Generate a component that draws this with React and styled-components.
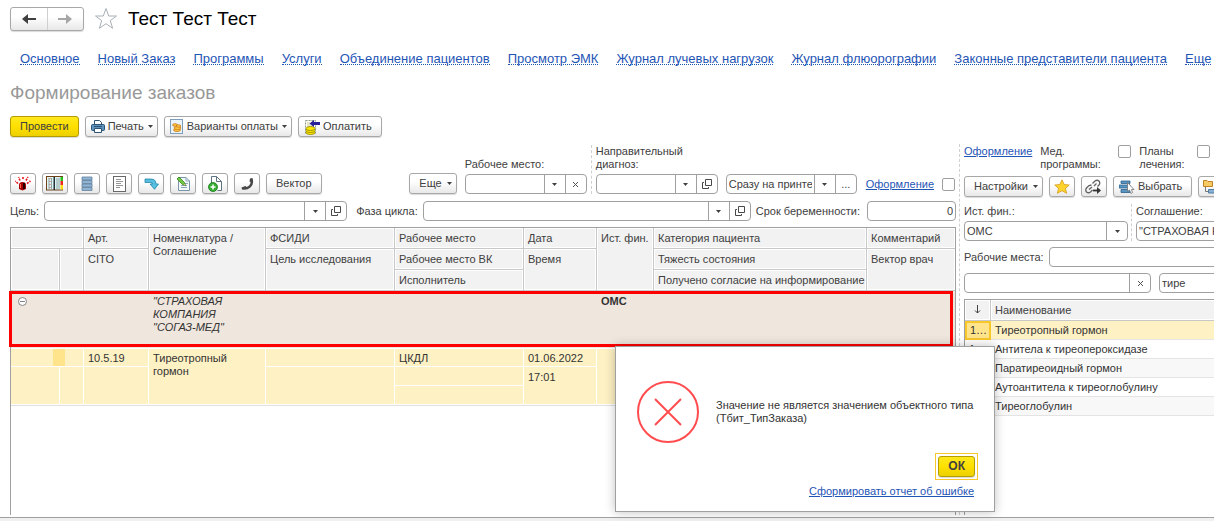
import { useState } from "react";
import styled, { createGlobalStyle, css } from "styled-components";

const sections = [
    "Основное",
    "Новый Заказ",
    "Программы",
    "Услуги",
    "Объединение пациентов",
    "Просмотр ЭМК",
    "Журнал лучевых нагрузок",
    "Журнал флюорографии",
    "Законные представители пациента",
    "Еще"
];

const analyses = [
    { code: "1…", name: "Тиреотропный гормон" },
    { code: "1…", name: "Антитела к тиреопероксидазе" },
    { code: "", name: "Паратиреоидный гормон" },
    { code: "", name: "Аутоантитела к тиреоглобулину" },
    { code: "", name: "Тиреоглобулин" }
];

export default function App() {
    const [dialogOpen, setDialogOpen] = useState(true);

    return (
        <Page>
            <GlobalStyle />
            <Header>
                <History>
                    <HistoryButton aria-label="Назад"><ArrowIcon color="#404040" /></HistoryButton>
                    <HistoryButton aria-label="Вперед"><ArrowIcon color="#a6a6a6" flip /></HistoryButton>
                </History>
                <StarOutline />
                <h1>Тест Тест Тест</h1>
            </Header>
            <Sections>
                {sections.map((name) => <a href="#" key={name}>{name}</a>)}
            </Sections>
            <FormTitle>Формирование заказов</FormTitle>
            <Commands>
                <Button primary>Провести</Button>
                <Button tight menu><PrinterIcon />Печать<Caret /></Button>
                <Button tight menu><CoinsIcon />Варианты оплаты<Caret /></Button>
                <Button tight><PayIcon />Оплатить</Button>
            </Commands>
            <Panes>
                <OrderPane>
                    <Toolbar>
                        <IconButton aria-label="Срочно"><SirenIcon /></IconButton>
                        <IconButton aria-label="Журнал"><BookIcon /></IconButton>
                        <IconButton aria-label="Список"><StackIcon /></IconButton>
                        <IconButton aria-label="Документ"><PageIcon /></IconButton>
                        <IconButton aria-label="Перенести"><TurnIcon /></IconButton>
                        <IconButton aria-label="Изменить"><EditIcon /></IconButton>
                        <IconButton aria-label="Добавить"><AddPageIcon /></IconButton>
                        <IconButton aria-label="Позвонить"><PhoneIcon /></IconButton>
                        <Button>Вектор</Button>
                        <Spacer />
                        <Button menu>Еще<Caret /></Button>
                        <Stack width="122px" indent>
                            <label htmlFor="place">Рабочее место:</label>
                            <Field id="place" parts={["caret", "clear"]} />
                        </Stack>
                        <Divided>
                            <Stack width="122px" indent>
                                <label htmlFor="diagnosis">Направительный диагноз:</label>
                                <Field id="diagnosis" parts={["caret", "open"]} />
                            </Stack>
                        </Divided>
                        <Stack width="131px" indent>
                            <Field id="printer" label="Печать" value="Сразу на принтер" parts={["caret", "dots"]} />
                        </Stack>
                        <CheckGroup>
                            <a href="#" id="design">Оформление</a>
                            <Check type="checkbox" aria-labelledby="design" />
                        </CheckGroup>
                    </Toolbar>
                    <Row>
                        <label htmlFor="target">Цель:</label>
                        <Grow size={303}><Field id="target" parts={["caret", "open"]} /></Grow>
                        <Label htmlFor="phase">Фаза цикла:</Label>
                        <Grow size={328}><Field id="phase" parts={["caret", "open"]} /></Grow>
                        <label htmlFor="term">Срок беременности:</label>
                        <Stack width="89px" indent><Field id="term" value="0" right /></Stack>
                    </Row>
                    <OrderFrame>
                        <OrderTable>
                            <colgroup>
                                <col width="49" /><col width="24" /><col width="65" /><col width="117" />
                                <col width="129" /><col width="129" /><col width="73" /><col width="57" />
                                <col width="213" /><col />
                            </colgroup>
                            <thead>
                                <tr>
                                    <th colSpan="2"></th>
                                    <th>Арт.</th>
                                    <th rowSpan="3">Номенклатура / Соглашение</th>
                                    <th>ФСИДИ</th>
                                    <th>Рабочее место</th>
                                    <th>Дата</th>
                                    <th rowSpan="3">Ист. фин.</th>
                                    <th>Категория пациента</th>
                                    <th>Комментарий</th>
                                </tr>
                                <tr>
                                    <th rowSpan="2"></th>
                                    <th rowSpan="2"></th>
                                    <th rowSpan="2">CITO</th>
                                    <th rowSpan="2">Цель исследования</th>
                                    <th>Рабочее место ВК</th>
                                    <th rowSpan="2">Время</th>
                                    <th>Тяжесть состояния</th>
                                    <th rowSpan="2">Вектор врач</th>
                                </tr>
                                <tr>
                                    <th>Исполнитель</th>
                                    <th>Получено согласие на информирование</th>
                                </tr>
                            </thead>
                            <tbody>
                                <GroupRow>
                                    <td colSpan="3"><Toggle aria-label="Свернуть"><MinusIcon /></Toggle></td>
                                    <td><i>"СТРАХОВАЯ КОМПАНИЯ "СОГАЗ-МЕД"</i></td>
                                    <td colSpan="3"></td>
                                    <td colSpan="3"><b>ОМС</b></td>
                                </GroupRow>
                                <OrderRow>
                                    <td colSpan="2"><Mark /></td>
                                    <td>10.5.19</td>
                                    <td rowSpan="3">Тиреотропный гормон</td>
                                    <td></td>
                                    <td>ЦКДЛ</td>
                                    <td>01.06.2022</td>
                                    <td rowSpan="3"></td>
                                    <td></td>
                                    <td></td>
                                </OrderRow>
                                <OrderRow>
                                    <td rowSpan="2"></td>
                                    <td rowSpan="2"></td>
                                    <td rowSpan="2"></td>
                                    <td rowSpan="2"></td>
                                    <td></td>
                                    <td rowSpan="2">17:01</td>
                                    <td></td>
                                    <td rowSpan="2"></td>
                                </OrderRow>
                                <OrderRow>
                                    <td></td>
                                    <td></td>
                                </OrderRow>
                            </tbody>
                        </OrderTable>
                        <RedFrame />
                    </OrderFrame>
                </OrderPane>
                <CatalogPane>
                    <Catalog>
                        <Options>
                            <a href="#">Оформление</a>
                            <label htmlFor="med">Мед. программы:</label>
                            <Check type="checkbox" id="med" />
                            <label htmlFor="plans">Планы лечения:</label>
                            <Check type="checkbox" id="plans" />
                        </Options>
                        <Commands>
                            <Button menu>Настройки<Caret /></Button>
                            <IconButton aria-label="Избранное"><StarIcon /></IconButton>
                            <IconButton aria-label="Ссылка"><LinkIcon /></IconButton>
                            <Button tight><PickIcon />Выбрать</Button>
                            <IconButton aria-label="Иерархия"><TreeIcon /></IconButton>
                        </Commands>
                        <Sources>
                            <Stack width="164px">
                                <label htmlFor="source">Ист. фин.:</label>
                                <Field id="source" value="ОМС" parts={["caret"]} />
                            </Stack>
                            <Divided>
                                <Stack width="164px" indent>
                                    <label htmlFor="agreement">Соглашение:</label>
                                    <Field id="agreement" value={'"СТРАХОВАЯ КОМПАНИЯ "СОГАЗ-МЕД"'} />
                                </Stack>
                            </Divided>
                        </Sources>
                        <Row>
                            <label htmlFor="places">Рабочие места:</label>
                            <Grow size={1}><Field id="places" /></Grow>
                        </Row>
                        <Row gap="8px">
                            <Stack width="187px"><Field id="filter" label="Отбор" parts={["clear"]} /></Stack>
                            <Grow size={1}><Field id="search" label="Поиск" value="тире" /></Grow>
                        </Row>
                        <CatalogFrame>
                            <CatalogTable>
                                <colgroup><col width="26" /><col /></colgroup>
                                <thead>
                                    <tr>
                                        <th><SortIcon /></th>
                                        <th>Наименование</th>
                                    </tr>
                                </thead>
                                <tbody>
                                    {analyses.map(({ code, name }, index) => (
                                        <CatalogRow key={name} selected={index === 0}>
                                            <td>{code}</td>
                                            <td>{name}</td>
                                        </CatalogRow>
                                    ))}
                                </tbody>
                            </CatalogTable>
                        </CatalogFrame>
                    </Catalog>
                </CatalogPane>
            </Panes>
            <BottomBar />
            {dialogOpen && (
                <Dialog role="dialog" aria-label="Ошибка">
                    <Message>
                        <ErrorIcon />
                        <p>Значение не является значением объектного типа (Тбит_ТипЗаказа)</p>
                    </Message>
                    <Focus><Button primary bold onClick={() => setDialogOpen(false)}>ОК</Button></Focus>
                    <a href="#">Сформировать отчет об ошибке</a>
                </Dialog>
            )}
        </Page>
    );
}

function Field({ id, value, label, right, parts = [] }) {
    const icons = {
        caret: <Caret />,
        clear: <ClearIcon />,
        open: <OpenIcon />,
        dots: "..."
    };
    const names = { caret: "Список", clear: "Очистить", open: "Открыть", dots: "Выбрать" };

    return (
        <FieldBox>
            <FieldInput id={id} aria-label={label} defaultValue={value} right={right} />
            {parts.map((part) => (
                <FieldButton key={part} aria-label={names[part]}>{icons[part]}</FieldButton>
            ))}
        </FieldBox>
    );
}

/* icons */

function ArrowIcon({ color, flip }) {
    return (
        <svg width="14" height="10" viewBox="0 0 14 10" fill="none" stroke={color} strokeWidth="2" transform={flip ? "scale(-1 1)" : undefined}>
            <path d="M14 5H2" />
            <path d="M6 0V10L0 5Z" fill={color} stroke="none" />
        </svg>
    );
}

function StarOutline() {
    return (
        <svg width="24" height="23" viewBox="0 0 24 23" fill="none" stroke="#a9b0b6" strokeWidth="1">
            <path d="M12 1.5 14.7 9H22.5L16.3 13.6 18.6 21.3 12 16.7 5.4 21.3 7.7 13.6 1.5 9H9.3Z" />
        </svg>
    );
}

function Caret() {
    return (
        <svg width="5" height="3" viewBox="0 0 5 3"><path d="M0 0H5L2.5 3Z" fill="#404040" /></svg>
    );
}

function ClearIcon() {
    return (
        <svg width="7" height="7" viewBox="0 0 7 7" stroke="#505050"><path d="M1 1 6 6M6 1 1 6" /></svg>
    );
}

function OpenIcon() {
    return (
        <svg width="10" height="10" viewBox="0 0 10 10" fill="none" stroke="#484848">
            <path d="M3.5 .5H9.5V6.5H3.5ZM2 3.5H.5V9.5H6.5V8" />
        </svg>
    );
}

function PrinterIcon() {
    return (
        <svg width="14" height="15" viewBox="0 0 14 15" stroke="#2d5475">
            <path d="M3.5 6V1.5H8.5L10.5 3.5V6" fill="#fff" />
            <rect x=".5" y="5.5" width="13" height="6" rx="1" fill="#5f93bc" />
            <path d="M3 7.5H11" />
            <path d="M3.5 9.5H10.5V13.5H3.5Z" fill="#fff" />
        </svg>
    );
}

function CoinsIcon() {
    return (
        <svg width="14" height="15" viewBox="0 0 14 15">
            <rect x=".5" y=".5" width="12" height="14" fill="#e8f3fc" stroke="#7d9db8" />
            <g fill="#ffc941" stroke="#c9791c" strokeWidth=".8">
                <ellipse cx="7" cy="11" rx="3.5" ry="1.5" />
                <ellipse cx="7.5" cy="9" rx="3.5" ry="1.5" />
                <ellipse cx="5" cy="6" rx="2.5" ry="1.3" />
                <ellipse cx="8.5" cy="7" rx="2.3" ry="1.2" />
            </g>
        </svg>
    );
}

function PayIcon() {
    return (
        <svg width="16" height="16" viewBox="0 0 16 16">
            <path d="M1.5 1.5H11.5V14.5H1.5Z" fill="#fffef0" stroke="#8b9a8c" strokeDasharray="2 1" />
            <path d="M3 4H6M3 6H9M3 8H8" stroke="#c7c7a8" />
            <g fill="#ffe800" stroke="#8f8400" strokeWidth=".8">
                <ellipse cx="6.5" cy="13.5" rx="4.5" ry="2" />
                <ellipse cx="6.5" cy="11.5" rx="4.5" ry="2" />
                <ellipse cx="6.5" cy="9.5" rx="4.5" ry="2" />
            </g>
            <path d="M16 3V6H10V8L5.5 4.5 10 1V3Z" fill="#29219c" />
        </svg>
    );
}

function SirenIcon() {
    return (
        <svg width="16" height="15" viewBox="0 0 16 15">
            <path d="M4 13V9Q4 6 7.5 6T11 9V13L7.5 14.5Z" fill="#a90000" />
            <path d="M8 7H10V13H8Z" fill="#210000" />
            <path d="M5 8H6V12H5Z" fill="#ff6c54" />
            <path d="M5 4.5 3.5 1M8 3V0M11 4.5 13 1M3 7.5 0 5M12 7.5 15.5 5" stroke="#e8131b" strokeWidth="1.6" strokeDasharray="2 1" />
        </svg>
    );
}

function BookIcon() {
    return (
        <svg width="18" height="15" viewBox="0 0 18 15">
            <rect x=".5" y=".5" width="16" height="13.5" fill="#dff4f3" stroke="#704218" />
            <path d="M3 2V13M5.5 2V13M11 2V13M13 2V13" stroke="#78908f" strokeWidth=".8" />
            <path d="M7.5 1H9V14H7.5Z" fill="#1e3236" />
            <path d="M4 2V13" stroke="#cf5c50" strokeDasharray="1 2" />
            <path d="M14.5 1H17V5H14.5Z" fill="#29c11f" />
            <path d="M14.5 5H17V9H14.5Z" fill="#ef2a1d" />
            <path d="M14.5 9H17V13.5H14.5Z" fill="#ffe017" />
        </svg>
    );
}

function StackIcon() {
    return (
        <svg width="12" height="15" viewBox="0 0 12 15" fill="#91b4d2" stroke="#6383a1" strokeWidth=".8">
            <path d="M1 1H11V4H1ZM1 4.5H11V7.5H1ZM1 8H11V11H1ZM1 11.5H11V14.5H1Z" />
        </svg>
    );
}

function PageIcon() {
    return (
        <svg width="13" height="16" viewBox="0 0 13 16" fill="none">
            <rect x=".5" y=".5" width="12" height="15" fill="#fff" stroke="#686868" />
            <path d="M3 3.5H8M3 5.5H10M3 7.5H8M3 9.5H10M3 11.5H7" stroke="#969696" />
        </svg>
    );
}

function TurnIcon() {
    return (
        <svg width="15" height="12" viewBox="0 0 15 12">
            <path d="M1 1H7Q12 1 12 6H14.5L10.5 11.3 6 6H8.5Q8.5 4.5 6.5 4.5H1Z" fill="#56bfdf" stroke="#2586a8" strokeWidth=".8" />
        </svg>
    );
}

function EditIcon() {
    return (
        <svg width="15" height="16" viewBox="0 0 15 16">
            <path d="M2.5 1.5H10L13.5 5V14.5H2.5Z" fill="#f4f9fc" stroke="#7894a8" />
            <path d="M10 1.5V5H13.5M7 7.5H12M5 9.5H11M5 11.5H11" fill="none" stroke="#8da6b6" />
            <path d="M1 3 3 1 8.5 6.5 9.5 9.5 6.5 8.5Z" fill="#72c842" stroke="#358119" strokeWidth=".8" />
            <path d="M8.5 7.5 9.5 9.5 7.5 9Z" fill="#f2bd7c" />
        </svg>
    );
}

function AddPageIcon() {
    return (
        <svg width="15" height="16" viewBox="0 0 15 16">
            <path d="M3.5 7V.5H8.5L13.5 5.5V14.5H9.5" fill="#fff" stroke="#5f7483" />
            <path d="M8.5 .5V5.5H13.5" fill="none" stroke="#5f7483" />
            <circle cx="5" cy="11" r="4.5" fill="#34ad31" stroke="#167b1d" strokeWidth=".8" />
            <path d="M5 8.5V13.5M2.5 11H7.5" stroke="#fff" strokeWidth="1.5" />
        </svg>
    );
}

function PhoneIcon() {
    return (
        <svg width="13" height="12" viewBox="0 0 13 12">
            <path d="M9 .5 11.5 0Q13.5 6 9.5 9.5 6 12.5 1 11.5L.5 9.5 4.5 8 5.5 9Q9.5 7.5 9.5 4L8.5 3.5Z" fill="#484848" />
        </svg>
    );
}

function StarIcon() {
    return (
        <svg width="16" height="15" viewBox="0 0 16 15">
            <path d="M8 .8 10.2 5.5 15.3 6 11.5 9.4 12.6 14.3 8 11.7 3.4 14.3 4.5 9.4 .7 6 5.8 5.5Z" fill="#ffd32e" stroke="#d39a1b" strokeWidth=".8" />
        </svg>
    );
}

function LinkIcon() {
    return (
        <svg width="17" height="15" viewBox="0 0 17 15" fill="none" stroke="#626262" strokeWidth="1.3">
            <path d="M7.5 4.5 10 2Q12 .5 14 2 15.5 4 14 6L12.5 7.5M6.5 6 4 6.5 1.5 9Q0 11 1.5 13 3.5 14.5 5.5 13L7.5 11M4 10.5 7 8M9 7 11.5 4.5" />
            <path d="M8 11.5H13" stroke="#333" strokeWidth="1.8" />
            <path d="M12 8 16 11.5 12 15Z" fill="#333" stroke="none" />
        </svg>
    );
}

function PickIcon() {
    return (
        <svg width="16" height="14" viewBox="0 0 16 14">
            <path d="M2 1H11V3.5H2ZM0 5H11V8H0ZM2 9.5H11V12.5H2Z" fill="#5797c7" stroke="#2e5f88" strokeWidth=".8" />
            <path d="M8.5 2.5V11.5L10.5 10 12 13.5 13.5 12.5 12.5 9.5H15Z" fill="#fff" stroke="#707070" strokeWidth=".8" />
        </svg>
    );
}

function TreeIcon() {
    return (
        <svg width="16" height="14" viewBox="0 0 16 14">
            <path d="M.5 .5H4L5 1.5H9.5V6.5H.5Z" fill="#f7c962" stroke="#bd8427" />
            <path d="M2.5 7V11.5H5" fill="none" stroke="#777" />
            <path d="M5.5 9.5H15V13H5.5Z" fill="#86b1d4" stroke="#527b9e" />
        </svg>
    );
}

function MinusIcon() {
    return (
        <svg width="9" height="9" viewBox="0 0 9 9" fill="none" stroke="#848484">
            <circle cx="4.5" cy="4.5" r="4" fill="#fff" /><path d="M2 4.5H7" />
        </svg>
    );
}

function SortIcon() {
    return (
        <svg width="7" height="9" viewBox="0 0 7 9" fill="none" stroke="#404040"><path d="M3.5 0V8M1 5.5 3.5 8 6 5.5" /></svg>
    );
}

function ErrorIcon() {
    return (
        <svg width="62" height="62" viewBox="0 0 62 62" fill="none" stroke="#ff4d4f" strokeWidth="2">
            <circle cx="31" cy="31" r="30" /><path d="M18 18 44 44M44 18 18 44" />
        </svg>
    );
}

const GlobalStyle = createGlobalStyle`
    * {
        box-sizing: border-box;
    }

    body {
        margin: 0;
        background-color: #ffffff;
        color: #404040;
        font-family: "Liberation Sans", Arial, sans-serif;
        font-size: 11px;
        line-height: 13px;
    }

    button, input {
        font: inherit;
        color: inherit;
    }

    a {
        color: #1f55b5;
    }

    svg {
        flex-shrink: 0;
    }
`;

const Page = styled.div`
    position: relative;
    display: flex;
    flex-direction: column;
    min-height: 100vh;
    overflow: hidden;
`;
const Header = styled.header`
    display: flex;
    align-items: center;
    gap: 10px;
    height: 37px;
    padding-left: 10px;

    h1 {
        margin: 0;
        color: #000000;
        font-size: 19px;
        font-weight: 400;
        line-height: 22px;
    }
`;
const raised = css`
    border: 1px solid #a8a8a8;
    border-radius: 3px;
    background: linear-gradient(#ffffff 40%, #e8e8e8);
    box-shadow: 0 1px 1px rgba(0, 0, 0, 0.15);
`;
const History = styled.div`
    ${raised}
    display: flex;
    width: 74px;
    height: 24px;
`;
const HistoryButton = styled.button`
    flex: 1;
    display: flex;
    align-items: center;
    justify-content: center;
    padding: 0;
    border: 0;
    background: none;

    & + & {
        border-left: 1px solid #d0d0d0;
    }
`;
const Sections = styled.nav`
    display: flex;
    gap: 18px;
    height: 43px;
    padding: 14px 0 0 20px;
    font-size: 13px;
    line-height: 15px;
    white-space: nowrap;

    a {
        height: 14px;
        border-bottom: 1px dotted #1f55b5;
        text-decoration: none;
    }
`;
const FormTitle = styled.h2`
    margin: 0;
    padding: 2px 10px 12px;
    color: #999999;
    font-size: 19px;
    font-weight: 400;
    line-height: 22px;
`;
const Commands = styled.div`
    display: flex;
    gap: 6px;
    padding-left: 10px;
`;
const Button = styled.button.withConfig({ shouldForwardProp: (p) => !["primary", "tight", "menu", "bold"].includes(p) })`
    ${raised}
    display: flex;
    align-items: center;
    flex-shrink: 0;
    gap: ${(props) => (props.tight ? "3px" : "5px")};
    height: 21px;
    padding: ${(props) => (props.tight ? "0 9px 0 5px" : "0 9px")};
    white-space: nowrap;

    ${(props) => props.menu && css`
        padding-right: 4px;

        svg:last-child {
            margin-left: ${props.tight ? "1px" : "0"};
        }
    `}
    ${(props) => props.primary && css`
        border-color: #b39b00;
        background: linear-gradient(#ffe81f, #ffe000 50%, #ecd000);
    `}
    ${(props) => props.bold && css`
        font-size: 12px;
        font-weight: 700;
    `}
`;
const IconButton = styled.button`
    ${raised}
    display: flex;
    align-items: center;
    justify-content: center;
    flex-shrink: 0;
    width: 26px;
    height: 21px;
    padding: 0;
`;
const Panes = styled.main`
    flex: 1;
    display: flex;
    padding: 7px 0 2px 10px;
`;
const OrderPane = styled.section`
    flex: 1;
    display: flex;
    flex-direction: column;
    min-width: 0;
    gap: 7px;
`;
const Toolbar = styled.div`
    display: flex;
    align-items: flex-end;
    gap: 6px;
    height: 50px;
`;
const Spacer = styled.div`
    flex: 1;
`;
const Stack = styled.div.withConfig({ shouldForwardProp: (p) => !["width", "indent"].includes(p) })`
    display: flex;
    flex-direction: column;
    flex-shrink: 0;
    gap: 3px;
    width: ${(props) => props.width};
    margin-left: ${(props) => (props.indent ? "2px" : "0")};
`;
const Divided = styled.div`
    display: flex;
    align-items: flex-end;
    margin-left: -2px;
    padding-left: 2px;
    border-left: 1px dashed #d0d0d0;
`;
const CheckGroup = styled.div`
    display: flex;
    align-items: center;
    gap: 8px;
    height: 20px;
    margin: 0 1px 0 3px;
`;
const Check = styled.input`
    appearance: none;
    flex-shrink: 0;
    width: 13px;
    height: 13px;
    margin: 0;
    border: 1px solid #a0a0a0;
    border-radius: 2px;
    background-color: #ffffff;
`;
const Row = styled.div`
    display: flex;
    align-items: center;
    gap: ${(props) => props.gap || "5px"};
`;
const Label = styled.label`
    margin-left: 4px;
`;
const Grow = styled.div`
    flex: ${(props) => props.size} 1 0;
    min-width: 0;
`;
const FieldBox = styled.div`
    display: flex;
    width: 100%;
    height: 20px;
    border: 1px solid #a0a0a0;
    border-radius: 4px;
    background-color: #ffffff;
    overflow: hidden;
`;
const FieldInput = styled.input.withConfig({ shouldForwardProp: (p) => p !== "right" })`
    flex: 1;
    min-width: 0;
    padding: 0 2px;
    border: 0;
    outline: 0;
    background: none;
    text-align: ${(props) => (props.right ? "right" : "left")};
`;
const FieldButton = styled.button`
    display: flex;
    align-items: center;
    justify-content: center;
    width: 21px;
    padding: 0;
    border: 0;
    border-left: 1px solid #a0a0a0;
    background: none;
`;
const OrderFrame = styled.div`
    position: relative;
    flex: 1;
    border: solid #a0a0a0;
    border-width: 1px 1px 0;
    margin-top: -1px;
`;
const headCell = css`
    height: 21px;
    padding: 4px 4px 3px;
    border: solid #c8c8c8;
    border-width: 0 1px 1px 0;
    background-color: #f2f2f2;
    box-shadow: inset 0 0 0 1px #ffffff;
    font-weight: 400;
    text-align: left;
    vertical-align: top;
`;
const OrderTable = styled.table`
    width: 100%;
    table-layout: fixed;
    border-spacing: 0;
    border-bottom: 1px solid #e0e0e0;

    th {
        ${headCell}
        white-space: nowrap;
    }

    th[rowspan="3"] {
        white-space: normal;
    }

    tr:not(:last-child) th:last-child {
        border-right: 0;
    }

    td {
        vertical-align: top;
        color: #333333;
    }
`;
const GroupRow = styled.tr`
    td {
        height: 58px;
        padding: 4px 4px 0;
        border-bottom: 1px solid #ffffff;
        background-color: #efe6dd;
    }

    i {
        display: block;
        width: 80px;
    }
`;
const Toggle = styled.button`
    display: block;
    margin-left: 3px;
    padding: 1px 0 0;
    border: 0;
    background: none;
`;
const OrderRow = styled.tr`
    td {
        height: 18px;
        padding: 3px 4px 0;
        border: solid #ffffff;
        border-width: 0 1px 1px 0;
        background-color: #fef1c4;
    }

    &:nth-child(n + 3) td {
        height: 19px;
        padding-top: 4px;
    }

    td:first-child[colspan] {
        padding: 0 0 0 42px;
    }
`;
const Mark = styled.div`
    width: 12px;
    height: 17px;
    background-color: #ffe48c;
`;
const RedFrame = styled.div`
    position: absolute;
    top: 63px;
    left: -2px;
    right: 2px;
    height: 56px;
    border: 3px solid #ff0000;
    pointer-events: none;
`;
const CatalogPane = styled.aside`
    flex: 0 0 255px;
    display: flex;
    margin-left: 3px;
    padding-left: 4px;
    border-left: 1px dashed #d0d0d0;
    overflow: hidden;
`;
const Catalog = styled.div`
    flex: 0 0 340px;
    display: flex;
    flex-direction: column;
    gap: 6px;

    ${Commands} {
        padding: 0;
    }
`;
const Options = styled.div`
    display: flex;
    align-items: flex-start;
    height: 26px;
    gap: 8px;
    padding-top: 1px;

    label {
        width: 70px;
    }

    label + input + label {
        width: 50px;
    }
`;
const Sources = styled.div`
    display: flex;
    gap: 5px;
    align-items: stretch;
    padding-top: 1px;

    ${Stack} {
        padding-top: 1px;
    }
`;
const CatalogFrame = styled.div`
    flex: 1;
    border: solid #a0a0a0;
    border-width: 1px 0 0 1px;
`;
const CatalogTable = styled.table`
    width: 100%;
    table-layout: fixed;
    border-spacing: 0;

    th {
        ${headCell}
        height: 21px;
    }

    th:first-child {
        text-align: center;
    }
`;
const CatalogRow = styled.tr.withConfig({ shouldForwardProp: (p) => p !== "selected" })`
    &:nth-child(odd) td {
        background-color: #f8f8f8;
    }

    && td {
        height: 19px;
        padding: 2px 4px 1px;
        border-bottom: 1px solid #e4e4e4;
        color: #333333;
        white-space: nowrap;
        overflow: hidden;
        ${(props) => props.selected && "background-color: #fef1c4;"}
    }

    && td:first-child {
        ${(props) => props.selected && css`
            padding: 1px 3px;
            border: 2px solid #f7c72c;
            background-color: #ffe48c;
        `}
    }
`;
const BottomBar = styled.footer`
    height: 4px;
    border-top: 1px solid #a0a0a0;
    background-color: #f0f0f0;
`;
const Dialog = styled.div`
    position: absolute;
    top: 346px;
    left: 615px;
    display: flex;
    flex-direction: column;
    align-items: flex-end;
    width: 380px;
    height: 166px;
    padding: 34px 20px 12px 21px;
    border: 1px solid #a0a0a0;
    background-color: #ffffff;
    box-shadow: 0 0 10px rgba(0, 0, 0, 0.25);
`;
const Message = styled.div`
    display: flex;
    align-items: center;
    gap: 17px;
    width: 100%;

    p {
        flex: 1;
        margin: 0;
        color: #333333;
    }
`;
const Focus = styled.div`
    margin: 10px -4px 5px 0;
    padding: 2px;
    border: 1px solid #f7c72c;
`;
